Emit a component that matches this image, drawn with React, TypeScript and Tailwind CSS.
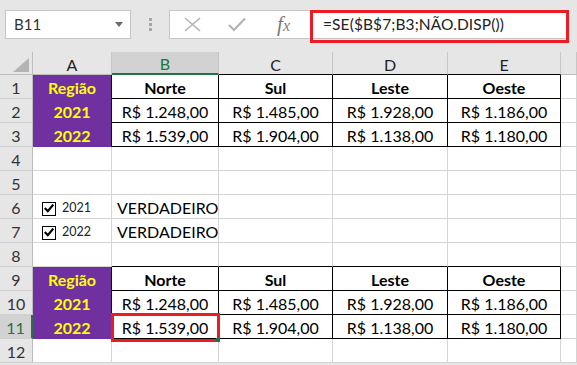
import React from "react";

type CellProps = { className?: string; children?: React.ReactNode };

const Cell = ({ className = "", children }: CellProps) => (
  <div className={`flex items-center pt-[3px] overflow-visible whitespace-nowrap border-r border-b ${className}`}>{children}</div>
);

const G = "border-r-[#d4d4d4] border-b-[#d4d4d4] bg-white";
const PURPLE = "bg-[#7030a0] border-r-black border-b-[#7030a0] justify-center font-bold text-[#ffff00]";
const TBL = "bg-white border-r-black border-b-black justify-center text-black";
const RH = "bg-[#e6e6e6] border-r-[#bdbdbd] border-b-[#cfcfcf] justify-center text-[#333] text-[16px]";

const Check = () => (
  <div className="w-[14px] h-[14px] border border-black bg-white flex items-center justify-center">
    <svg width="10" height="9" viewBox="0 0 10 9">
      <path d="M1.5 4.8 L3.8 7.2 L8.6 1.4" stroke="black" strokeWidth="2.2" fill="none" strokeLinecap="square" />
    </svg>
  </div>
);

const cols = ["A", "B", "C", "D", "E", ""];
const header = ["Norte", "Sul", "Leste", "Oeste"];
const v2021 = ["R$ 1.248,00", "R$ 1.485,00", "R$ 1.928,00", "R$ 1.186,00"];
const v2022 = ["R$ 1.539,00", "R$ 1.904,00", "R$ 1.138,00", "R$ 1.180,00"];

export default function App() {
  const rows: React.ReactNode[] = [];

  const tableRows = (start: number) => {
    const labels = ["Região", "2021", "2022"];
    const data = [header, v2021, v2022];
    for (let i = 0; i < 3; i++) {
      const r = start + i;
      const sel = r === 11;
      rows.push(
        <Cell key={`rh${r}`} className={sel ? "bg-[#d2d2d2] border-r-2 border-r-[#217346] border-b-[#cfcfcf] justify-center text-[#217346] text-[16px]" : RH}>{r}</Cell>
      );
      rows.push(<Cell key={`a${r}`} className={PURPLE}>{labels[i]}</Cell>);
      data[i].forEach((t, j) =>
        rows.push(
          <Cell key={`c${r}${j}`} className={`${TBL} ${i === 0 ? "font-bold" : ""}`}>{t}</Cell>
        )
      );
      rows.push(<Cell key={`f${r}`} className={G} />);
    }
  };

  const plainRow = (r: number, a?: React.ReactNode, b?: React.ReactNode, bottomBlack = false) => {
    rows.push(<Cell key={`rh${r}`} className={RH}>{r}</Cell>);
    rows.push(
      <Cell key={`a${r}`} className={`${G} ${bottomBlack ? "border-b-[#7030a0]" : ""}`}>{a}</Cell>
    );
    rows.push(
      <Cell key={`b${r}`} className={`${G} ${bottomBlack ? "border-b-black" : ""}`}>{b}</Cell>
    );
    for (let j = 0; j < 3; j++)
      rows.push(<Cell key={`x${r}${j}`} className={`${G} ${bottomBlack ? "border-b-black" : ""}`} />);
    rows.push(<Cell key={`f${r}`} className={G} />);
  };

  tableRows(1);
  plainRow(4);
  plainRow(5);
  const cb = (y: string) => (
    <div className="flex items-center gap-[6px] pl-[9px] pt-[1px]">
      <Check />
      <span className="text-[12.5px] text-[#222]">{y}</span>
    </div>
  );
  const verd = <span className="pl-[5px]">VERDADEIRO</span>;
  plainRow(6, cb("2021"), verd);
  plainRow(7, cb("2022"), verd);
  plainRow(8, undefined, undefined, true);
  tableRows(9);
  plainRow(12);

  return (
    <div className="w-[577px] h-[365px] bg-[#e6e6e6] overflow-hidden relative font-['Lato',sans-serif] text-[16px] text-black">
      {/* top bar */}
      <div className="h-[52px] flex items-start pt-[10px] pl-[5px]">
        <div className="w-[126px] h-[29px] bg-white border border-[#c6c6c6] flex items-center justify-between pl-[8px] pr-[7px]">
          <span className="text-[15px] text-[#333]">B11</span>
          <svg width="8" height="5" viewBox="0 0 8 5">
            <path d="M0 0 H8 L4 5 Z" fill="#6b6b6b" />
          </svg>
        </div>
        <div className="w-[38px] h-[29px] flex flex-col items-center justify-center gap-[2px]">
          <div className="w-[3px] h-[3px] bg-[#a6a6a6]" />
          <div className="w-[3px] h-[3px] bg-[#a6a6a6]" />
          <div className="w-[3px] h-[3px] bg-[#a6a6a6]" />
        </div>
        <div className="relative w-[399px] h-[29px] bg-white border border-[#c6c6c6] flex items-center">
          <div className="w-[31px] flex justify-end">
            <svg width="17" height="15" viewBox="0 0 17 15">
              <path d="M1 1 L16 14 M16 1 L1 14" stroke="#b4b4b4" strokeWidth="1.6" />
            </svg>
          </div>
          <div className="w-[45px] flex justify-end">
            <svg width="18" height="15" viewBox="0 0 18 15">
              <path d="M1 8 L6 13 L17 1.5" stroke="#b4b4b4" strokeWidth="2.2" fill="none" />
            </svg>
          </div>
          <div className="w-[44px] flex justify-end">
            <span className="font-['Liberation_Serif',serif] italic text-[21px] text-[#7a7a7a] leading-none">
              f<span className="text-[16px]">x</span>
            </span>
          </div>
          <span className="ml-[33px] text-[15.5px] text-[#222] tracking-[0.1px]">=SE($B$7;B3;NÃO.DISP())</span>
          <div className="absolute left-[140px] top-[-1px] w-[259px] h-[33px] border-[3px] border-[#ed1c24]" />
        </div>
      </div>

      {/* grid */}
      <div className="grid grid-cols-[33px_79px_107px_114px_115px_113px_16px] grid-rows-[23px_repeat(12,24px)]">
        <div className="relative bg-[#e6e6e6] border-r border-b border-r-[#bdbdbd] border-b-[#bdbdbd]">
          <svg className="absolute left-[13px] top-[6px]" width="16" height="14" viewBox="0 0 16 14">
            <path d="M16 0 L16 14 L0 14 Z" fill="#b4b4b4" />
          </svg>
        </div>
        {cols.map((c, i) => {
          let cls = "bg-[#e6e6e6] border-r-[#c6c6c6] border-b-[#bdbdbd] justify-center text-[#222]";
          if (c === "B") cls = "bg-[#d2d2d2] border-r-[#c6c6c6] border-b-2 border-b-[#217346] justify-center text-[#217346]";
          else if (i >= 2 && i <= 4) cls = "bg-[#e6e6e6] border-r-[#c6c6c6] border-b-black justify-center text-[#222]";
          return (
            <Cell key={`h${i}`} className={cls}>
              {c}
            </Cell>
          );
        })}
        {rows}
      </div>

      <div className="absolute left-[111px] top-[313px] w-[109px] h-[29px] border-[3px] border-[#ed1c24]" />
      <div className="absolute left-[216px] top-[338px] w-[4px] h-[4px] bg-[#217346]" />
    </div>
  );
}
